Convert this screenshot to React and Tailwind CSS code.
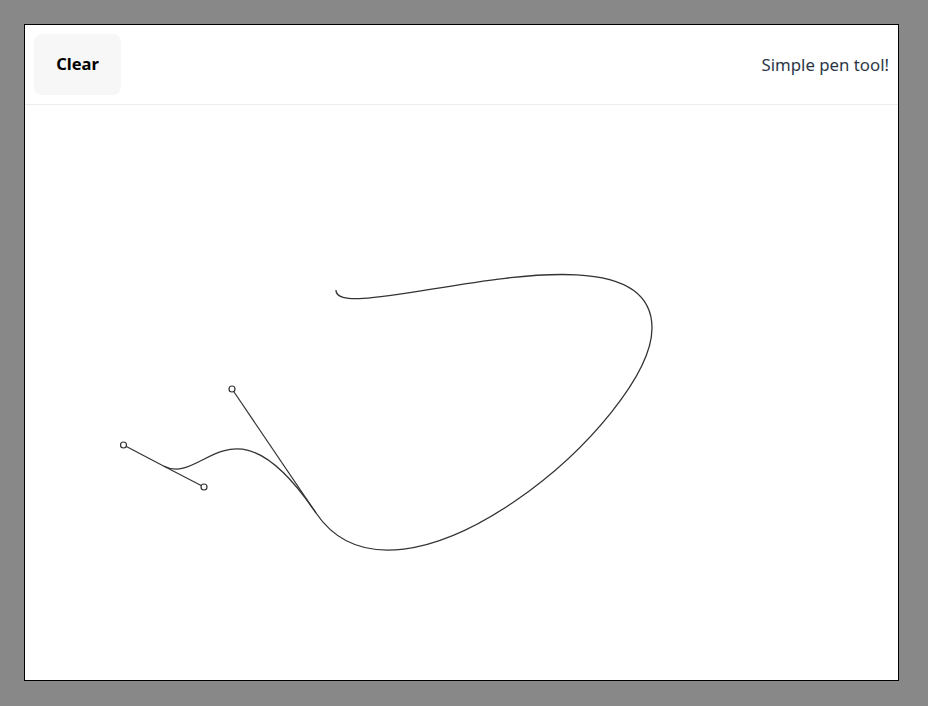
import { useState } from "react";

const font = { fontFamily: '"Noto Sans", "Open Sans", sans-serif' };

// page-space coordinates, the svg viewBox starts at the canvas corner
const path =
  "M336 290 C334 330 652 210 652 328 C652 418 400 637 316 513 C232 389 204 487 163.5 466";

function Handle({ x1, y1, x2, y2 }) {
  return (
    <g>
      <line x1={x1} y1={y1} x2={x2} y2={y2} stroke="#333" strokeWidth="1.2" />
      <circle cx={x2} cy={y2} r="3" fill="#fff" stroke="#333" strokeWidth="1.2" />
    </g>
  );
}

export default function App() {
  const [points, setPoints] = useState(true);

  return (
    <div className="w-[928px] h-[706px] bg-[#888888] p-6" style={font}>
      <div className="flex flex-col w-[875px] h-[657px] bg-white border border-black">
        <div className="flex items-center justify-between h-[80px] px-[9px] border-b border-[#ececec]">
          <button
            className="w-[87px] h-[61px] rounded-lg bg-[#f7f7f7] text-[16.5px] font-bold text-black"
            onClick={() => setPoints(false)}
          >
            Clear
          </button>
          <span className="text-[16.8px] text-[#2d3748]">Simple pen tool!</span>
        </div>
        <svg className="flex-1 w-full" viewBox="25 105 873 575">
          {points && (
            <g>
              <path d={path} fill="none" stroke="#333" strokeWidth="1.3" />
              <Handle x1={316} y1={513} x2={232} y2={389} />
              <Handle x1={163.5} y1={466} x2={123.5} y2={445} />
              <Handle x1={163.5} y1={466} x2={204} y2={487} />
            </g>
          )}
        </svg>
      </div>
    </div>
  );
}
